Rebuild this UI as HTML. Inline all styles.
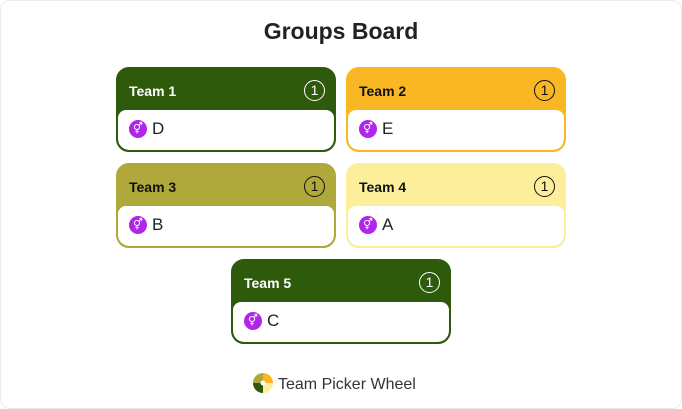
<!DOCTYPE html>
<html><head><style>
body{margin:0;width:682px;height:409px;background:#fff;font-family:"Liberation Sans",sans-serif;position:relative;overflow:hidden}
.frame{position:absolute;left:0;top:0;width:680px;height:407px;border:1px solid #ececec;border-radius:10px}
h1{position:absolute;top:18px;left:0;width:682px;text-align:center;margin:0;font-size:23px;font-weight:bold;color:#222}
.card{position:absolute;width:216px;height:81px;border:2px solid;border-radius:13px;overflow:hidden}
.hd{height:41px;position:relative;font-weight:bold;font-size:14px}
.hd span{position:absolute;left:11px;top:14px}
.num{position:absolute;right:9px;top:11px;width:21px;height:21px;border:1.3px solid;border-radius:50%;font-weight:normal;font-size:14px;text-align:center;box-sizing:border-box;line-height:19px}
.bd{height:40px;background:#fff;border-radius:8px 8px 11px 11px;position:relative}
.ic{position:absolute;left:11px;top:10px;width:18px;height:18px;border-radius:50%;background:#b026e8;color:#fff;font-size:11px;text-align:center;line-height:18px}
.nm{position:absolute;left:34px;top:9px;font-size:17px;color:#222}
.foot{position:absolute;top:373px;left:253px;font-size:16px;color:#333}
</style></head><body>
<div class="frame"></div>
<h1>Groups Board</h1>
<div class="card" style="left:116px;top:67px;border-color:#2d5a0b;background:#2d5a0b;color:#fff"><div class="hd"><span>Team 1</span><div class="num">1</div></div><div class="bd"><div class="ic">⚥</div><div class="nm">D</div></div></div>
<div class="card" style="left:346px;top:67px;border-color:#f8b723;background:#f8b723;color:#111"><div class="hd"><span>Team 2</span><div class="num">1</div></div><div class="bd"><div class="ic">⚥</div><div class="nm">E</div></div></div>
<div class="card" style="left:116px;top:163px;border-color:#afa83a;background:#afa83a;color:#111"><div class="hd"><span>Team 3</span><div class="num">1</div></div><div class="bd"><div class="ic">⚥</div><div class="nm">B</div></div></div>
<div class="card" style="left:346px;top:163px;border-color:#fcee9a;background:#fcee9a;color:#111"><div class="hd"><span>Team 4</span><div class="num">1</div></div><div class="bd"><div class="ic">⚥</div><div class="nm">A</div></div></div>
<div class="card" style="left:231px;top:259px;border-color:#2d5a0b;background:#2d5a0b;color:#fff"><div class="hd"><span>Team 5</span><div class="num">1</div></div><div class="bd"><div class="ic">⚥</div><div class="nm">C</div></div></div>
<div class="foot"><svg width="20" height="20" viewBox="0 0 20 20" style="vertical-align:-4px;margin-right:5px"><path d="M10 10L10 0A10 10 0 0 1 20 10Z" fill="#f8b723"/><path d="M10 10L20 10A10 10 0 0 1 10 20Z" fill="#fcee9a"/><path d="M10 10L10 20A10 10 0 0 1 0 10Z" fill="#2d5a0b"/><path d="M10 10L0 10A10 10 0 0 1 10 0Z" fill="#afa83a"/><circle cx="10" cy="10" r="2.5" fill="#fff"/></svg>Team Picker Wheel</div>
</body></html>
